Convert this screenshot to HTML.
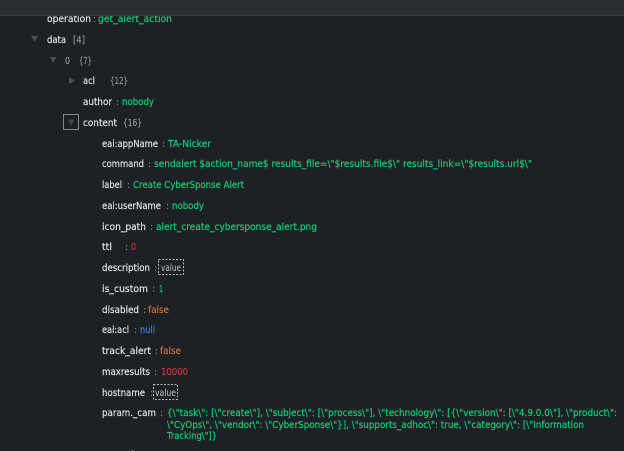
<!DOCTYPE html>
<html>
<head>
<meta charset="utf-8">
<style>
html,body{margin:0;padding:0;background:#1d2126;width:624px;height:451px;overflow:hidden}
svg{display:block;position:absolute;left:0;top:0}
text{font-family:"DejaVu Sans",sans-serif;font-size:9.4px;white-space:pre;stroke-width:.15px}
.t{filter:blur(.25px)}
.k{fill:#e2e4e5;stroke:#e2e4e5}
.c{fill:#8a8d90}
.g{fill:#14d278;stroke:#14d278}
.r{fill:#d5343b;stroke:#d5343b}
.o{fill:#cf6c40;stroke:#cf6c40}
.b{fill:#3a8ad0;stroke:#3a8ad0}
.n{fill:#94979a;stroke:#94979a}
.v{fill:#c0c2c4}
</style>
</head>
<body>
<svg width="624" height="451" viewBox="0 0 624 451" xmlns="http://www.w3.org/2000/svg">
<rect width="624" height="451" fill="#1d2126"/>

<g class="t">
<text class="k" x="47" y="22" textLength="44" lengthAdjust="spacingAndGlyphs">operation</text><text class="c" x="93" y="22">:</text><text class="g" x="98" y="22" textLength="74" lengthAdjust="spacingAndGlyphs">get_alert_action</text>
<text class="k" x="47" y="43" textLength="19" lengthAdjust="spacingAndGlyphs">data</text><text class="n" x="73" y="43" textLength="12" lengthAdjust="spacingAndGlyphs">[4]</text>
<text class="n" x="65" y="64" textLength="5" lengthAdjust="spacingAndGlyphs">0</text><text class="n" x="79" y="64" textLength="13" lengthAdjust="spacingAndGlyphs">{7}</text>
<text class="k" x="83" y="84" textLength="12" lengthAdjust="spacingAndGlyphs">acl</text><text class="n" x="110" y="84" textLength="18" lengthAdjust="spacingAndGlyphs">{12}</text>
<text class="k" x="83" y="105" textLength="29" lengthAdjust="spacingAndGlyphs">author</text><text class="c" x="116" y="105">:</text><text class="g" x="122" y="105" textLength="32" lengthAdjust="spacingAndGlyphs">nobody</text>
<text class="k" x="83" y="126" textLength="34" lengthAdjust="spacingAndGlyphs">content</text><text class="n" x="123" y="126" textLength="19" lengthAdjust="spacingAndGlyphs">{16}</text>

<text class="k" x="102" y="147" textLength="56" lengthAdjust="spacingAndGlyphs">eai:appName</text><text class="c" x="162" y="147">:</text><text class="g" x="168" y="147" textLength="43" lengthAdjust="spacingAndGlyphs">TA-Nicker</text>
<text class="k" x="102" y="167" textLength="42" lengthAdjust="spacingAndGlyphs">command</text><text class="c" x="148" y="167">:</text><text class="g" x="154" y="167" textLength="378" lengthAdjust="spacingAndGlyphs">sendalert $action_name$ results_file=\"$results.file$\" results_link=\"$results.url$\"</text>
<text class="k" x="102" y="188" textLength="20" lengthAdjust="spacingAndGlyphs">label</text><text class="c" x="127" y="188">:</text><text class="g" x="133" y="188" textLength="111" lengthAdjust="spacingAndGlyphs">Create CyberSponse Alert</text>
<text class="k" x="102" y="209" textLength="59" lengthAdjust="spacingAndGlyphs">eai:userName</text><text class="c" x="166" y="209">:</text><text class="g" x="172" y="209" textLength="32" lengthAdjust="spacingAndGlyphs">nobody</text>
<text class="k" x="102" y="230" textLength="44" lengthAdjust="spacingAndGlyphs">icon_path</text><text class="c" x="150" y="230">:</text><text class="g" x="156" y="230" textLength="161" lengthAdjust="spacingAndGlyphs">alert_create_cybersponse_alert.png</text>
<text class="k" x="102" y="250" textLength="10" lengthAdjust="spacingAndGlyphs">ttl</text><text class="c" x="125" y="250">:</text><text class="r" x="131" y="250" textLength="5" lengthAdjust="spacingAndGlyphs">0</text>
<text class="k" x="102" y="271" textLength="48" lengthAdjust="spacingAndGlyphs">description</text><text class="c" x="154" y="271">:</text>
<rect x="158.500" y="259.500" width="25" height="15" fill="none" stroke="#b5b7b9" stroke-width="1" stroke-dasharray="2 1.500"/>
<text class="v" x="161" y="271" textLength="20" lengthAdjust="spacingAndGlyphs">value</text>
<text class="k" x="102" y="292" textLength="46" lengthAdjust="spacingAndGlyphs">is_custom</text><text class="c" x="152" y="292">:</text><text class="g" x="159" y="292" textLength="4" lengthAdjust="spacingAndGlyphs">1</text>
<text class="k" x="102" y="313" textLength="37" lengthAdjust="spacingAndGlyphs">disabled</text><text class="c" x="143" y="313">:</text><text class="o" x="148" y="313" textLength="21" lengthAdjust="spacingAndGlyphs">false</text>
<text class="k" x="102" y="333" textLength="27" lengthAdjust="spacingAndGlyphs">eai:acl</text><text class="c" x="134" y="333">:</text><text class="b" x="140" y="333" textLength="15" lengthAdjust="spacingAndGlyphs">null</text>
<text class="k" x="102" y="354" textLength="49" lengthAdjust="spacingAndGlyphs">track_alert</text><text class="c" x="155" y="354">:</text><text class="o" x="160" y="354" textLength="21" lengthAdjust="spacingAndGlyphs">false</text>
<text class="k" x="102" y="375" textLength="48" lengthAdjust="spacingAndGlyphs">maxresults</text><text class="c" x="154" y="375">:</text><text class="r" x="161" y="375" textLength="27" lengthAdjust="spacingAndGlyphs">10000</text>
<text class="k" x="102" y="396" textLength="43" lengthAdjust="spacingAndGlyphs">hostname</text><text class="c" x="150" y="396">:</text>
<rect x="153.500" y="384.500" width="24" height="15" fill="none" stroke="#b5b7b9" stroke-width="1" stroke-dasharray="2 1.500"/>
<text class="v" x="155" y="396" textLength="21" lengthAdjust="spacingAndGlyphs">value</text>
<text class="k" x="102" y="416" textLength="54" lengthAdjust="spacingAndGlyphs">param._cam</text><text class="c" x="160" y="416">:</text>
<text class="g" x="167" y="416" textLength="450" lengthAdjust="spacingAndGlyphs">{\"task\": [\"create\"], \"subject\": [\"process\"], \"technology\": [{\"version\": [\"4.9.0.0\"], \"product\":</text>
<text class="g" x="167" y="428" textLength="417" lengthAdjust="spacingAndGlyphs">\"CyOps\", \"vendor\": \"CyberSponse\"}], \"supports_adhoc\": true, \"category\": [\"Information</text>
<text class="g" x="167" y="439" textLength="50" lengthAdjust="spacingAndGlyphs">Tracking\"]}</text>
<text class="k" x="102" y="458" textLength="43" lengthAdjust="spacingAndGlyphs">operation</text><text class="c" x="149" y="458">:</text><text class="g" x="150" y="458" textLength="6" lengthAdjust="spacingAndGlyphs">0</text>
</g>

<rect x="0" y="0" width="624" height="15" fill="#2a2d31"/>
<rect x="0" y="15" width="624" height="1" fill="#383b40"/>

<!-- arrows -->
<path d="M31 36h7l-3.500 6z" fill="#4c4f53"/>
<path d="M50 57h6.500l-3.200 6z" fill="#4c4f53"/>
<path d="M69 77l6 3.500-6 3.500z" fill="#4c4f53"/>
<rect x="63.500" y="114.500" width="15" height="15" fill="none" stroke="#85878a" stroke-width="1"/>
<path d="M68 119.500h6.500l-3.200 6z" fill="#45484c"/>
</svg>
</body>
</html>
